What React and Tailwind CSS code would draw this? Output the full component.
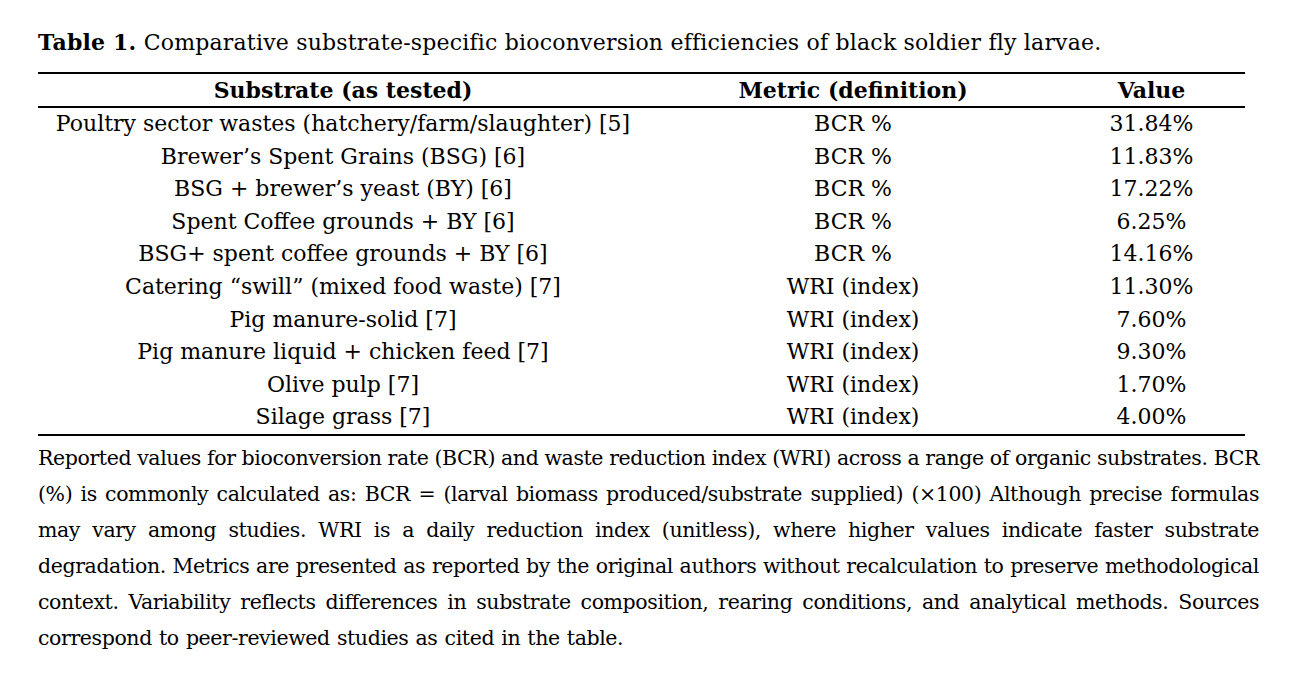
const rows = [
  ['Poultry sector wastes (hatchery/farm/slaughter) [5]', 'BCR %', '31.84%'],
  ['Brewer’s Spent Grains (BSG) [6]', 'BCR %', '11.83%'],
  ['BSG + brewer’s yeast (BY) [6]', 'BCR %', '17.22%'],
  ['Spent Coffee grounds + BY [6]', 'BCR %', '6.25%'],
  ['BSG+ spent coffee grounds + BY [6]', 'BCR %', '14.16%'],
  ['Catering “swill” (mixed food waste) [7]', 'WRI (index)', '11.30%'],
  ['Pig manure-solid [7]', 'WRI (index)', '7.60%'],
  ['Pig manure liquid + chicken feed [7]', 'WRI (index)', '9.30%'],
  ['Olive pulp [7]', 'WRI (index)', '1.70%'],
  ['Silage grass [7]', 'WRI (index)', '4.00%'],
]

const caption = [
  'Reported values for bioconversion rate (BCR) and waste reduction index (WRI) across a range of organic substrates. BCR',
  '(%) is commonly calculated as: BCR = (larval biomass produced/substrate supplied) (×100) Although precise formulas',
  'may vary among studies. WRI is a daily reduction index (unitless), where higher values indicate faster substrate',
  'degradation. Metrics are presented as reported by the original authors without recalculation to preserve methodological',
  'context. Variability reflects differences in substrate composition, rearing conditions, and analytical methods. Sources',
  'correspond to peer-reviewed studies as cited in the table.',
]

export default function App() {
  return (
    <div className="w-[1290px] h-[679px] bg-white text-black font-['DejaVu_Serif',serif] text-[22px]">
      <div className="pl-[38px] pr-[31px] pt-[28px]">
        <p className="leading-[28px] whitespace-nowrap tracking-[0.2px]">
          <span className="font-bold">Table 1.</span> Comparative substrate-specific bioconversion efficiencies of black soldier fly larvae.
        </p>
        <div className="mt-[15px] w-[1207px] border-t-2 border-b-2 border-black">
          <div className="grid grid-cols-[610px_410px_187px] font-bold text-center leading-[32px] border-b-2 border-black whitespace-nowrap">
            <div>Substrate (as tested)</div>
            <div>Metric (definition)</div>
            <div>Value</div>
          </div>
          {rows.map(([s, m, v]) => (
            <div key={s} className="grid grid-cols-[610px_410px_187px] text-center leading-[32.6px] whitespace-nowrap">
              <div>{s}</div>
              <div>{m}</div>
              <div>{v}</div>
            </div>
          ))}
        </div>
        <div className="mt-[4px] w-[1221px] leading-[36px] text-[20.5px] tracking-[-0.4px]">
          {caption.map((line, i) => (
            <div
              key={i}
              className={i < caption.length - 1
                ? 'whitespace-nowrap [word-spacing:-2px] text-justify [text-align-last:justify]'
                : 'whitespace-nowrap [word-spacing:1px]'}
            >
              {line}
            </div>
          ))}
        </div>
      </div>
    </div>
  )
}
